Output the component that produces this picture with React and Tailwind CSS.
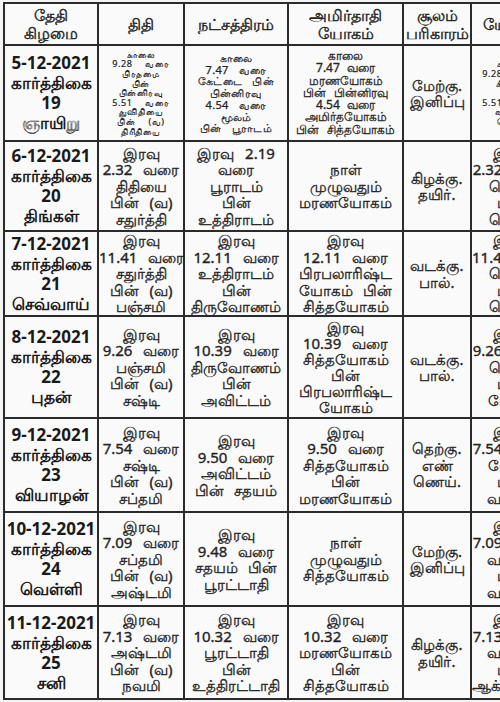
import React from 'react';

const cols = ['w-[94px]', 'w-[86px]', 'w-[104px]', 'w-[115px]', 'w-[68px]', 'w-[80px]'];

const header = [
  ['தேதி', 'கிழமை'],
  ['திதி'],
  ['நட்சத்திரம்'],
  ['அமிர்தாதி', 'யோகம்'],
  ['சூலம்', 'பரிகாரம்'],
  ['யோகம்'],
];

// each row: height class, then cells as [sizeClass, lines]
const rows = [
  {
    h: 'h-[96px]',
    cells: [
      ['day', ['5-12-2021', 'கார்த்திகை', '19', 'ஞாயிறு']],
      ['xs', ['காலை', '9.28 வரை', 'பிரதமை', 'பின்', 'பின்னிரவு', '5.51 வரை', 'துவிதியை', 'பின் (வ)', 'திரிதியை']],
      ['sm', ['காலை', '7.47 வரை', 'கேட்டை பின்', 'பின்னிரவு', '4.54 வரை', 'மூலம்', 'பின் பூராடம்']],
      ['md', ['காலை', '7.47 வரை', 'மரணயோகம்', 'பின் பின்னிரவு', '4.54 வரை', 'அமிர்தயோகம்', 'பின் சித்தயோகம்']],
      ['lg', ['மேற்கு.', 'இனிப்பு']],
      ['xs', ['காலை', '9.28 வரை', 'கிழக்கு', 'பின்', '5.51 வரை', 'வடக்கு', 'தெற்கு']],
    ],
  },
  {
    h: 'h-[90px]',
    cells: [
      ['day', ['6-12-2021', 'கார்த்திகை', '20', 'திங்கள்']],
      ['lg', ['இரவு', '2.32 வரை', 'திதியை', 'பின் (வ)', 'சதுர்த்தி']],
      ['lg', ['இரவு 2.19', 'வரை', 'பூராடம்', 'பின்', 'உத்திராடம்']],
      ['lg', ['நாள்', 'முழுவதும்', 'மரணயோகம்']],
      ['lg', ['கிழக்கு.', 'தயிர்.']],
      ['lg', ['இரவு', '2.32 வரை', 'தெற்கு', 'பின்', 'தெற்கு']],
    ],
  },
  {
    h: 'h-[85px]',
    cells: [
      ['day', ['7-12-2021', 'கார்த்திகை', '21', 'செவ்வாய்']],
      ['lg', ['இரவு', '11.41 வரை', 'சதுர்த்தி', 'பின் (வ)', 'பஞ்சமி']],
      ['lg', ['இரவு', '12.11 வரை', 'உத்திராடம்', 'பின்', 'திருவோணம்']],
      ['lg', ['இரவு', '12.11 வரை', 'பிரபலாரிஷ்ட', 'யோகம் பின்', 'சித்தயோகம்']],
      ['lg', ['வடக்கு.', 'பால்.']],
      ['lg', ['இரவு', '11.41 வரை', 'தெற்கு', 'பின்', 'தெற்கு']],
    ],
  },
  {
    h: 'h-[102px]',
    cells: [
      ['day', ['8-12-2021', 'கார்த்திகை', '22', 'புதன்']],
      ['lg', ['இரவு', '9.26 வரை', 'பஞ்சமி', 'பின் (வ)', 'சஷ்டி']],
      ['lg', ['இரவு', '10.39 வரை', 'திருவோணம்', 'பின்', 'அவிட்டம்']],
      ['lg6', ['இரவு', '10.39 வரை', 'சித்தயோகம்', 'பின்', 'பிரபலாரிஷ்ட', 'யோகம்']],
      ['lg', ['வடக்கு.', 'பால்.']],
      ['lg', ['இரவு', '9.26 வரை', 'தெற்கு', 'பின்', 'மேற்கு']],
    ],
  },
  {
    h: 'h-[94px]',
    cells: [
      ['day', ['9-12-2021', 'கார்த்திகை', '23', 'வியாழன்']],
      ['lg', ['இரவு', '7.54 வரை', 'சஷ்டி', 'பின் (வ)', 'சப்தமி']],
      ['lg', ['இரவு', '9.50 வரை', 'அவிட்டம்', 'பின் சதயம்']],
      ['lg', ['இரவு', '9.50 வரை', 'சித்தயோகம்', 'பின்', 'மரணயோகம்']],
      ['lg', ['தெற்கு.', 'எண்', 'ணெய்.']],
      ['lg', ['இரவு', '7.54 வரை', 'மேற்கு', 'பின்', 'வடக்கு']],
    ],
  },
  {
    h: 'h-[94px]',
    cells: [
      ['day', ['10-12-2021', 'கார்த்திகை', '24', 'வெள்ளி']],
      ['lg', ['இரவு', '7.09 வரை', 'சப்தமி', 'பின் (வ)', 'அஷ்டமி']],
      ['lg', ['இரவு', '9.48 வரை', 'சதயம் பின்', 'பூரட்டாதி']],
      ['lg', ['நாள்', 'முழுவதும்', 'சித்தயோகம்']],
      ['lg', ['மேற்கு.', 'இனிப்பு']],
      ['lg', ['இரவு', '7.09 வரை', 'வடக்கு', 'பின்', 'வடக்கு']],
    ],
  },
  {
    h: 'h-[93px]',
    cells: [
      ['day', ['11-12-2021', 'கார்த்திகை', '25', 'சனி']],
      ['lg', ['இரவு', '7.13 வரை', 'அஷ்டமி', 'பின் (வ)', 'நவமி']],
      ['lg', ['இரவு', '10.32 வரை', 'பூரட்டாதி', 'பின்', 'உத்திரட்டாதி']],
      ['lg', ['இரவு', '10.32 வரை', 'மரணயோகம்', 'பின்', 'சித்தயோகம்']],
      ['lg', ['கிழக்கு.', 'தயிர்.']],
      ['lg', ['இரவு', '7.13 வரை', 'வடக்கு', 'பின்', 'ஆக்னேயம்']],
    ],
  },
];

const sizes = {
  day: 'text-[17px] leading-[20px] font-bold text-[#1a1a1a]',
  xs: 'text-[9px] leading-[9.6px] tracking-[0.6px] [word-spacing:10px] [-webkit-text-stroke:0.2px]',
  sm: 'text-[11px] leading-[11.8px] tracking-[0.3px] [word-spacing:7px] [-webkit-text-stroke:0.25px]',
  md: 'text-[12px] leading-[12.2px] [word-spacing:4px] [-webkit-text-stroke:0.3px]',
  lg: 'text-[15px] leading-[16.5px] [word-spacing:7px] [-webkit-text-stroke:0.35px]',
  lg6: 'text-[15px] leading-[16px] [word-spacing:7px] [-webkit-text-stroke:0.35px]',
};

function Cell({ size, lines, i }) {
  return (
    <td className={`${cols[i]} border-2 border-[#2b2b2b] p-0 text-center align-middle`}>
      <div className={`${sizes[size]} whitespace-nowrap`}>
        {lines.map((l, k) => (
          <div key={k}>{l}</div>
        ))}
      </div>
    </td>
  );
}

export default function App() {
  return (
    <div
      className="w-[500px] h-[702px] overflow-hidden bg-[#f4f4f4] pl-[3px] pt-[2px] text-[#232323]"
      style={{ fontFamily: '"Noto Sans", "Liberation Sans", sans-serif' }}
    >
      <table className="table-fixed border-collapse w-[547px] bg-[#fafafa]">
        <thead>
          <tr className="h-[42px]">
            {header.map((lines, i) => (
              <th
                key={i}
                className={`${cols[i]} border-2 border-[#2b2b2b] p-0 text-[16px] leading-[18px] font-normal text-center whitespace-nowrap [-webkit-text-stroke:0.45px]`}
              >
                {lines.map((l, k) => (
                  <div key={k}>{l}</div>
                ))}
              </th>
            ))}
          </tr>
        </thead>
        <tbody>
          {rows.map((r, ri) => (
            <tr key={ri} className={r.h}>
              {r.cells.map(([size, lines], i) => (
                <Cell key={i} size={size} lines={lines} i={i} />
              ))}
            </tr>
          ))}
        </tbody>
      </table>
    </div>
  );
}
